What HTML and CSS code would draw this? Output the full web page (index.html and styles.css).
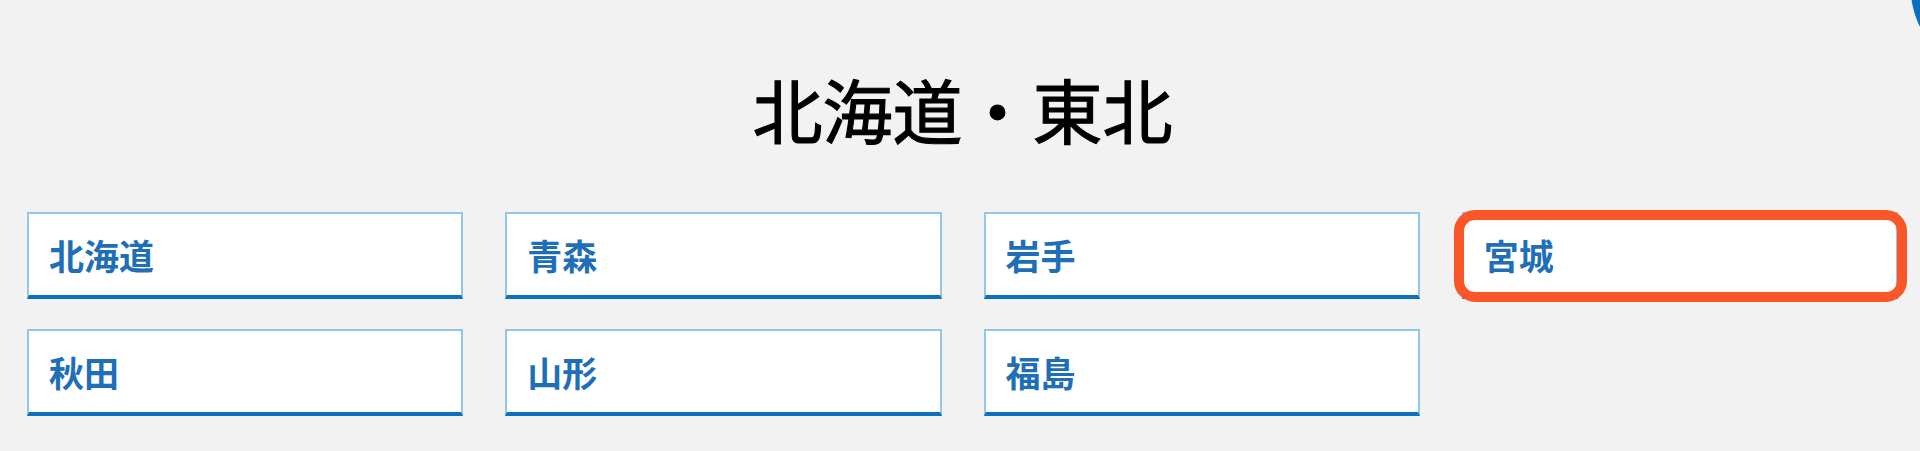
FILE: index.html
```html
<!DOCTYPE html>
<html lang="ja">
<head>
<meta charset="utf-8">
<title>北海道・東北</title>
<link rel="stylesheet" href="styles.css">
</head>
<body>
<div class="corner-clip"><div class="corner-badge"></div></div>
<section class="region">
  <h2 class="region-title">北海道・東北</h2>
  <ul class="pref-grid">
    <li class="pref"><a class="pref-link" href="#">北海道</a></li>
    <li class="pref"><a class="pref-link" href="#">青森</a></li>
    <li class="pref"><a class="pref-link" href="#">岩手</a></li>
    <li class="pref pref-highlight"><a class="pref-link" href="#">宮城</a><span class="highlight-ring"></span></li>
    <li class="pref"><a class="pref-link" href="#">秋田</a></li>
    <li class="pref"><a class="pref-link" href="#">山形</a></li>
    <li class="pref"><a class="pref-link" href="#">福島</a></li>
  </ul>
</section>
</body>
</html>
```
FILE: styles.css
```css
html, body {
  margin: 0;
  padding: 0;
}
body {
  background: #f2f2f2;
  font-family: "Noto Sans CJK JP", "Noto Sans", sans-serif;
  width: 1920px;
  height: 451px;
  overflow: hidden;
  position: relative;
}
.corner-clip {
  position: absolute;
  right: 0;
  top: 0;
  width: 12px;
  height: 30px;
  overflow: hidden;
}
.corner-badge {
  position: absolute;
  left: 3px;
  top: -90px;
  width: 160px;
  height: 160px;
  border-radius: 50%;
  background: #0b6fc0;
}
.region {
  padding: 67px 22px 0 27px;
}
.region-title {
  margin: 0;
  font-size: 70px;
  line-height: 84px;
  font-weight: 400;
  color: #000;
  text-align: center;
  -webkit-text-stroke: 1.1px #000;
}
.pref-grid {
  list-style: none;
  margin: 61px 0 0;
  padding: 0;
  display: grid;
  grid-template-columns: repeat(4, 1fr);
  column-gap: 42px;
  row-gap: 30px;
}
.pref {
  position: relative;
}
.pref-link {
  display: flex;
  align-items: center;
  box-sizing: border-box;
  height: 87px;
  padding: 0 20px 0 20px;
  background: #fff;
  border: 2px solid #93c6e8;
  border-bottom: 4px solid #0a70c0;
  color: #1f6fb8;
  font-size: 35px;
  font-weight: 700;
  line-height: 40px;
  text-decoration: none;
}
.highlight-ring {
  position: absolute;
  left: -8px;
  right: -9px;
  top: -2px;
  bottom: -3px;
  border: 10px solid #fa5628;
  border-radius: 21px;
  pointer-events: none;
}
```
